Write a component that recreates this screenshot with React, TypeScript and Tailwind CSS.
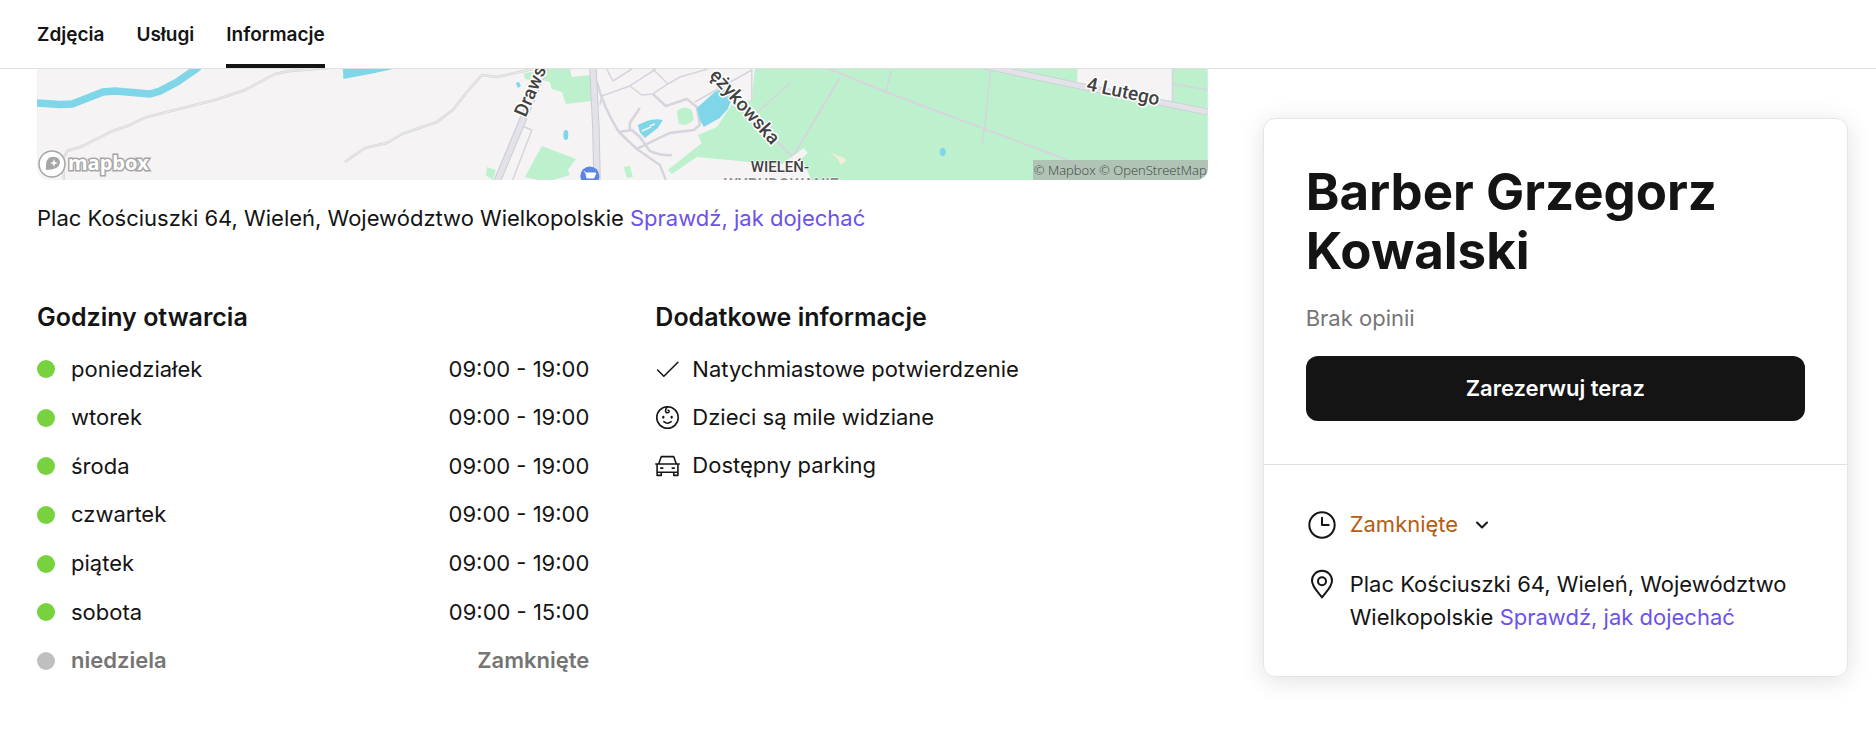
import type { ReactNode } from 'react';

const DAYS = [
  { name: 'poniedziałek', hours: '09:00 - 19:00', open: true },
  { name: 'wtorek', hours: '09:00 - 19:00', open: true },
  { name: 'środa', hours: '09:00 - 19:00', open: true },
  { name: 'czwartek', hours: '09:00 - 19:00', open: true },
  { name: 'piątek', hours: '09:00 - 19:00', open: true },
  { name: 'sobota', hours: '09:00 - 15:00', open: true },
  { name: 'niedziela', hours: 'Zamknięte', open: false },
];

const TABS = ['Zdjęcia', 'Usługi', 'Informacje'];

function Icon({ size, children }: { size: string; children: ReactNode }) {
  return (
    <svg
      viewBox="0 0 24 24"
      className={`${size} shrink-0`}
      fill="none"
      stroke="currentColor"
      strokeWidth="1.5"
      strokeLinecap="round"
      strokeLinejoin="round"
      aria-hidden="true"
    >
      {children}
    </svg>
  );
}

function Address() {
  return (
    <>
      Plac Kościuszki 64, Wieleń, Województwo Wielkopolskie{' '}
      <a href="#map" className="text-[#6b52ea]">Sprawdź, jak dojechać</a>
    </>
  );
}

function Map() {
  const minor = [
    'M64 182 L63 160 L67 151 L83 146 L113 131 L130 125 L147 117 L215 100 L245 90 L275 74 L290 71 L340 67',
    'M345 162 L365 148 L387 143 L402 134 L437 122 L453 110 L467 92 L482 75 L497 77 L533 69',
  ];
  return (
    <div id="map" className="relative overflow-hidden rounded-b-xl bg-[#f5f3f4]">
      <svg viewBox="37 69 1171 111" className="block w-full" role="img" aria-label="Mapa">
        <rect x="37" y="69" width="1171" height="111" fill="#f5f3f4" />
        <g fill="#bdf0cd">
          <path d="M547 69H570L572 77L591 75V101L566 104L562 92L552 89L550 82L543 80Z" />
          <path d="M524 73L535 72V81L525 79Z" />
          <path d="M542 146L576 159L568 170L570 175L547 182L525 177Z" />
          <path d="M487 167L496 170L493 180L486 175Z" />
          <path d="M624 167L630 166L633 177L627 178Z" />
          <path d="M677 111Q684 105 692 110L694 119Q688 127 679 124Z" />
          <path d="M755 69H1208V181H812L803 160L792 157L782 164L750 162L697 157L672 174L668 170L702 143L698 135L717 127L733 103L752 100Z" />
        </g>
        <path d="M1078 69H1172V101L1077 84Z" fill="#f5f3f4" />
        <g fill="none" stroke="#cfcfd3" strokeWidth="2.5" strokeLinejoin="round">
          {minor.map(d => <path key={d} d={d} />)}
        </g>
        <g fill="none" stroke="#e8e8ea" strokeWidth="1.5" strokeLinejoin="round">
          {minor.map(d => <path key={d} d={d} />)}
        </g>
        <path d="M37 103L60 104.500L72 104L80 101L103 92L115 91L150 94L160 91L177 82L199 67" fill="none" stroke="#7fd6e8" strokeWidth="7.500" />
        <path d="M343 69H393L375 73L343.500 79Z" fill="#7fd6e8" />
        <g fill="none" stroke="#d6d5de" strokeWidth="1.500" strokeLinejoin="round">
          <path d="M522 126L532 130L512 182" />
          <path d="M597 82Q603 106 619 132L637 149L660 165L666 180" strokeWidth="2.500" />
          <path d="M600 105L602 96L630 86L656 69" />
          <path d="M607 69L613 81L632 69" />
          <path d="M630 86L642 95L653 94L668 84L680 77L708 69" />
          <path d="M653 69L668 84" />
          <path d="M653 94L666 106L687 99L697 107L700 125L694 130L670 133L637 149" strokeWidth="2.500" />
          <path d="M695 102L752 70V100" />
          <path d="M619 132L632 130L640 137L650 151Q660 156 672 155" strokeWidth="2.500" />
          <path d="M630 130V123L640 108" strokeWidth="2.500" />
          <path d="M757 113L791 82" />
          <path d="M776 140L793 157L840 78" strokeWidth="2" />
          <path d="M830 69L886 92L1065 159L1085 169" strokeWidth="2" />
          <path d="M886 92L891 72" />
          <path d="M991 69L985 127L982 145" />
          <path d="M1173 69V102" />
          <path d="M1174 84L1208 90" />
        </g>
        <g fill="none" stroke="#cccbd5" strokeWidth="7.500">
          <path d="M545 67L497 182" />
          <path d="M593 67L596 127L597 170V182" />
          <path d="M985 66L1080 86L1208 112" strokeWidth="6.500" />
        </g>
        <g fill="none" stroke="#e3e2e9" strokeWidth="5.500">
          <path d="M545 67L497 182" />
          <path d="M593 67L596 127L597 170V182" />
          <path d="M985 66L1080 86L1208 112" strokeWidth="5" />
        </g>
        <g fill="#7fd6e8">
          <path d="M516 83L519 82L521 86L518 88Z" />
          <ellipse cx="566" cy="135" rx="2.500" ry="5" />
          <path d="M638 125L647 121Q656 118 663 120L658 128L645 138L640 132Z" />
          <path d="M697 108L715 92Q723 87 730 91L732 99L728 109L720 118L704 127L700 120Z" />
          <ellipse cx="943" cy="152" rx="3" ry="4" />
        </g>
        <path d="M642 131L651 127M650 126L655 124" stroke="#f5f3f4" strokeWidth="1.500" />
        <path d="M792 157L804 148L808 153L798 162Z" fill="#f5f3f4" />
        <path d="M830 152L839 156Q846 157 846 161L841 165L838 159Z" fill="#f3edd6" />
        <circle cx="590" cy="176" r="9.500" fill="#5b86e5" />
        <path d="M584 171L586 173H596L594 178H587L586 173" fill="#fff" stroke="#fff" strokeWidth="1" />
        <g
          fill="#424242"
          stroke="#fff"
          strokeWidth="3"
          paintOrder="stroke"
          strokeLinejoin="round"
          className="font-[Roboto] text-[19px] font-medium"
        >
          <text transform="translate(526 118) rotate(-67)">Draws</text>
          <text transform="translate(709 76) rotate(48)">ężykowska</text>
          <text transform="translate(1086 90) rotate(12)">4 Lutego</text>
          <text x="751" y="172" strokeWidth="1" className="text-[15px]">WIELEŃ-</text>
          <text x="724" y="190" fill="#8c8c8c" strokeWidth="1" className="text-[16px]">WYBUDOWANIE</text>
        </g>
        <g stroke="#a6a6a6">
          <circle cx="52" cy="164" r="13" fill="#fff" strokeWidth="1.500" />
          <path d="M46 170Q45 158 51 157Q60 156 60 163Q59 170 46 170Z" fill="#a6a6a6" stroke="none" />
          <path d="M54 159L55 162L58 163L55 164L54 167L53 164L50 163L53 162Z" fill="#fff" stroke="none" />
          <text x="68" y="170" fill="#fff" strokeWidth="3" paintOrder="stroke" className="font-['Open_Sans'] text-[20px] font-bold">mapbox</text>
        </g>
      </svg>
      <div className="absolute right-0 bottom-0 bg-[#a7a7a7]/60 px-px font-['Open_Sans'] text-[13px] leading-[20px] font-light text-[#404040]">
        © Mapbox © OpenStreetMap
      </div>
    </div>
  );
}

export default function App() {
  return (
    <div className="min-h-screen bg-white font-[Inter,sans-serif] text-[22px] leading-[33px] text-[#141414]">
      <nav className="flex h-[69px] gap-8 border-b border-[#e0e0e0] px-[37px] text-[19px] font-semibold">
        {TABS.map(t => (
          <a
            key={t}
            href="#map"
            className={`flex items-center border-y-4 border-t-transparent ${t === 'Informacje' ? 'border-b-[#141414]' : 'border-b-transparent'}`}
          >
            {t}
          </a>
        ))}
      </nav>

      <div className="flex gap-[55px] pr-[28px] pl-[37px]">
        <main className="min-w-0 flex-2">
          <Map />
          <p className="mt-[22px]"><Address /></p>

          <div className="mt-[65px] grid grid-cols-2 gap-[66px]">
            <section>
              <h2 className="text-[25px] leading-[34px] font-semibold">Godziny otwarcia</h2>
              <table className="mt-[11px] h-[340px] w-full">
                <tbody>
                  {DAYS.map(d => (
                    <tr key={d.name} className={d.open ? 'font-normal' : 'font-semibold text-[#757575]'}>
                      <th scope="row" className={`p-0 text-left ${d.open ? 'font-normal' : 'font-semibold'}`}>
                        <span className="flex items-center gap-4">
                          <span className={`size-[18px] rounded-full ${d.open ? 'bg-[#78d23d]' : 'bg-[#bfbfbf]'}`} />
                          {d.name}
                        </span>
                      </th>
                      <td className="p-0 text-right">{d.hours}</td>
                    </tr>
                  ))}
                </tbody>
              </table>
            </section>

            <section>
              <h2 className="text-[25px] leading-[34px] font-semibold">Dodatkowe informacje</h2>
              <ul className="mt-3">
                <li className="flex h-12 items-center gap-3">
                  <Icon size="size-[25px]"><path d="M2.500 12.500L8.500 18.500L22 5" /></Icon>
                  Natychmiastowe potwierdzenie
                </li>
                <li className="flex h-12 items-center gap-3">
                  <Icon size="size-[25px]">
                    <circle cx="12" cy="12" r="10.300" />
                    <path d="M8.500 16Q12 19 15.500 16" />
                    <path d="M12 1.700C9.500 3.500 9.500 7.500 12 7.500C14 7.500 14 5 12.500 5" />
                    <path d="M8 11.500V12M16 11.500V12" strokeWidth="2.200" />
                  </Icon>
                  Dzieci są mile widziane
                </li>
                <li className="flex h-12 items-center gap-3">
                  <Icon size="size-[25px]">
                    <path d="M3.500 10.500L6 3.500H18L20.500 10.500M.750 10.500H23.250M2 10.500V21.500H6V18.500H18V21.500H22V10.500M2 18.500H22M5.500 14.500H7.500M16.500 14.500H18.500" />
                  </Icon>
                  Dostępny parking
                </li>
              </ul>
            </section>
          </div>
        </main>

        <aside className="min-w-0 flex-1 pt-[49px]">
          <div className="rounded-xl border border-[#e5e5e5] shadow-[0_4px_24px_rgba(0,0,0,0.12)]">
            <div className="border-b border-[#e0e0e0] px-[42px] pt-[43px] pb-[43px]">
              <h1 className="text-[51px] leading-[59px] font-bold">Barber Grzegorz Kowalski</h1>
              <p className="mt-[22px] text-[#757575]">Brak opinii</p>
              <button className="mt-[21px] h-[65px] w-full rounded-xl bg-[#141414] font-semibold text-white">
                Zarezerwuj teraz
              </button>
            </div>
            <div className="flex flex-col gap-[27px] px-[42px] pt-[43px] pb-[42px]">
              <button className="flex items-center gap-[12px] text-left">
                <Icon size="size-[32px]">
                  <circle cx="12" cy="12" r="9.500" />
                  <path d="M12 6.500V12H17" />
                </Icon>
                <span className="text-[#b55d12]">Zamknięte</span>
                <Icon size="size-[24px]"><path d="M7 9.500L12 14.500L17 9.500" strokeWidth="2" /></Icon>
              </button>
              <div className="flex gap-[12px]">
                <Icon size="size-[32px]">
                  <path d="M12 22C9 18 4.500 14 4.500 9.500A7.500 7.500 0 0 1 19.500 9.500C19.500 14 15 18 12 22Z" />
                  <circle cx="12" cy="10" r="3" />
                </Icon>
                <p><Address /></p>
              </div>
            </div>
          </div>
        </aside>
      </div>
    </div>
  );
}
